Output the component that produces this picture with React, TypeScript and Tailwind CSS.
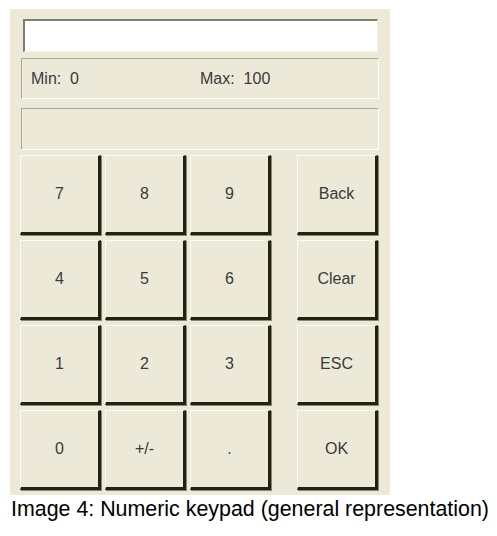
import React from "react";

const Key = ({ label, cls = "" }: { label: string; cls?: string }) => (
  <div
    className={`w-[81px] h-[80px] flex items-center justify-center bg-[#ECE9D8] border-t border-l border-t-[#fbfaf4] border-l-[#fbfaf4] border-r-[3px] border-b-[3px] border-r-[#23220f] border-b-[#23220f] shadow-[1px_1px_0_#8a8770] text-[16px] text-[#3a3a3a] ${cls}`}
  >
    {label}
  </div>
);

export default function App() {
  const font = { fontFamily: '"Liberation Sans", Arial, sans-serif' };
  return (
    <div className="w-[497px] h-[536px] bg-white relative" style={font}>
      <div className="ml-[10px] pt-[9px]">
        <div className="w-[380px] h-[486px] bg-[#ECE9D8] pt-[10px] pl-[10px]">
          <div className="ml-[3px] w-[355px] h-[33px] bg-white border-t-2 border-l-2 border-t-[#7f7d72] border-l-[#7f7d72] border-r border-b border-r-[#f4f3ea] border-b-[#f4f3ea]" />
          <div className="ml-[1px] mt-[6px] w-[358px] h-[41px] border border-t-[#aca899] border-l-[#aca899] border-r-white border-b-white flex items-center text-[16px] text-[#3a3a3a]">
            <span className="ml-[9px]">Min:&nbsp; 0</span>
            <span className="ml-[121px]">Max:&nbsp; 100</span>
          </div>
          <div className="ml-[1px] mt-[9px] w-[358px] h-[42px] border border-t-[#aca899] border-l-[#aca899] border-r-white border-b-white" />
          <div className="mt-[5px] flex flex-col gap-[5px]">
            {[
              ["7", "8", "9", "Back"],
              ["4", "5", "6", "Clear"],
              ["1", "2", "3", "ESC"],
              ["0", "+/-", ".", "OK"],
            ].map((row, i) => (
              <div key={i} className="flex gap-[4px]">
                <Key label={row[0]} />
                <Key label={row[1]} />
                <Key label={row[2]} />
                <Key label={row[3]} cls="ml-[22px]" />
              </div>
            ))}
          </div>
        </div>
      </div>
      <div className="ml-[11px] mt-[1px] text-[21.4px] leading-[26px] text-black whitespace-nowrap">
        Image 4: Numeric keypad (general representation)
      </div>
    </div>
  );
}
